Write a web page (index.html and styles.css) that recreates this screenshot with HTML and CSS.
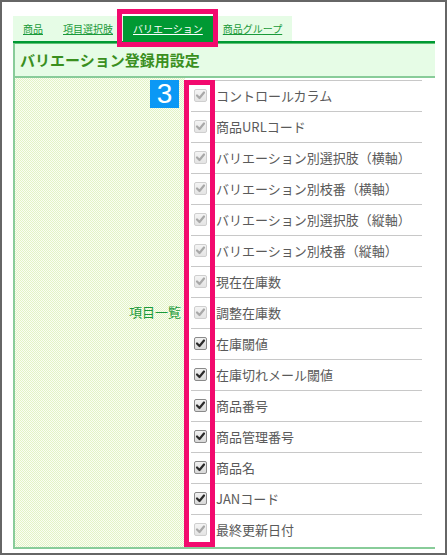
FILE: index.html
```html
<!DOCTYPE html>
<html lang="ja">
<head>
<meta charset="utf-8">
<title>バリエーション登録用設定</title>
<link rel="stylesheet" href="styles.css">
</head>
<body>
<div class="frame">
  <ul class="tabs">
    <li class="tab"><a href="#">商品</a></li>
    <li class="tab"><a href="#">項目選択肢</a></li>
    <li class="tab active"><a href="#">バリエーション</a></li>
    <li class="tab"><a href="#">商品グループ</a></li>
  </ul>
  <div class="panel">
    <h2 class="panel-title">バリエーション登録用設定</h2>
    <div class="panel-body">
      <div class="label-cell">項目一覧</div>
      <div class="list-cell">
        <ul class="items">
          <li class="item"><span class="cb off"><svg viewBox="0 0 13 13"><path d="M3 6.5 L5.5 9 L10 3.5"/></svg></span><span>コントロールカラム</span></li>
          <li class="item"><span class="cb off"><svg viewBox="0 0 13 13"><path d="M3 6.5 L5.5 9 L10 3.5"/></svg></span><span>商品URLコード</span></li>
          <li class="item"><span class="cb off"><svg viewBox="0 0 13 13"><path d="M3 6.5 L5.5 9 L10 3.5"/></svg></span><span>バリエーション別選択肢（横軸）</span></li>
          <li class="item"><span class="cb off"><svg viewBox="0 0 13 13"><path d="M3 6.5 L5.5 9 L10 3.5"/></svg></span><span>バリエーション別枝番（横軸）</span></li>
          <li class="item"><span class="cb off"><svg viewBox="0 0 13 13"><path d="M3 6.5 L5.5 9 L10 3.5"/></svg></span><span>バリエーション別選択肢（縦軸）</span></li>
          <li class="item"><span class="cb off"><svg viewBox="0 0 13 13"><path d="M3 6.5 L5.5 9 L10 3.5"/></svg></span><span>バリエーション別枝番（縦軸）</span></li>
          <li class="item"><span class="cb off"><svg viewBox="0 0 13 13"><path d="M3 6.5 L5.5 9 L10 3.5"/></svg></span><span>現在在庫数</span></li>
          <li class="item"><span class="cb off"><svg viewBox="0 0 13 13"><path d="M3 6.5 L5.5 9 L10 3.5"/></svg></span><span>調整在庫数</span></li>
          <li class="item"><span class="cb on"><svg viewBox="0 0 13 13"><path d="M3 6.5 L5.5 9 L10 3.5"/></svg></span><span>在庫閾値</span></li>
          <li class="item"><span class="cb on"><svg viewBox="0 0 13 13"><path d="M3 6.5 L5.5 9 L10 3.5"/></svg></span><span>在庫切れメール閾値</span></li>
          <li class="item"><span class="cb on"><svg viewBox="0 0 13 13"><path d="M3 6.5 L5.5 9 L10 3.5"/></svg></span><span>商品番号</span></li>
          <li class="item"><span class="cb on"><svg viewBox="0 0 13 13"><path d="M3 6.5 L5.5 9 L10 3.5"/></svg></span><span>商品管理番号</span></li>
          <li class="item"><span class="cb on"><svg viewBox="0 0 13 13"><path d="M3 6.5 L5.5 9 L10 3.5"/></svg></span><span>商品名</span></li>
          <li class="item"><span class="cb on"><svg viewBox="0 0 13 13"><path d="M3 6.5 L5.5 9 L10 3.5"/></svg></span><span>JANコード</span></li>
          <li class="item"><span class="cb off"><svg viewBox="0 0 13 13"><path d="M3 6.5 L5.5 9 L10 3.5"/></svg></span><span>最終更新日付</span></li>
        </ul>
      </div>
    </div>
  </div>
  <div class="hl hl-tab"></div>
  <div class="hl hl-checks"></div>
  <div class="badge">3</div>
</div>
</body>
</html>
```
FILE: styles.css
```css
* { box-sizing: border-box; }
html, body { margin: 0; padding: 0; background: #fff; }
body { font-family: "Noto Sans CJK JP", "Noto Sans", sans-serif; }

.frame {
  position: relative;
  width: 447px;
  height: 555px;
  border: 2px solid #666;
  padding: 14px 0 0 11px;
}

.tabs {
  list-style: none;
  margin: 0;
  padding: 0;
  display: flex;
  height: 25px;
}
.tab {
  background: #e6fce6;
  padding: 0 10px;
  font-size: 10px;
  line-height: 25px;
}
.tab a { color: #1a9a3a; text-decoration: underline; }
.tab.active { background: #009933; }
.tab.active a { color: #fff; }

.panel {
  width: 422px;
  border-top: 2px solid #009933;
}
.panel-title {
  margin: 0;
  height: 35px;
  border-top: 1px solid #5fc275;
  border-left: 2px solid #88cc99;
  border-bottom: 2px solid #88cc99;
  background: #e6fce6;
  padding-left: 5px;
  font-size: 15px;
  font-weight: bold;
  line-height: 31px;
  color: #3a8f1e;
}

.panel-body {
  display: flex;
  height: 471px;
  border-left: 2px solid #88cc99;
  border-bottom: 2px solid #88cc99;
}
.label-cell {
  width: 170px;
  display: flex;
  align-items: center;
  justify-content: flex-end;
  padding-right: 4px;
  padding-bottom: 2px;
  font-size: 13px;
  color: #1a9a3a;
  background-color: #f8fcf0;
  background-image: repeating-conic-gradient(#e2f3c6 0 25%, #fafdf3 0 50%);
  background-size: 2px 2px;
}
.list-cell {
  flex: 1;
  padding: 2px 13px 0 6px;
}
.items {
  list-style: none;
  margin: 0;
  padding: 0;
  border-top: 1px solid #c8c8c8;
}
.item {
  display: flex;
  align-items: center;
  gap: 9px;
  height: 31px;
  padding-left: 3px;
  padding-bottom: 2px;
  border-bottom: 1px solid #c8c8c8;
  font-size: 13px;
  color: #5a5a5a;
}
.item:last-child { border-bottom: none; height: 30px; }

.cb {
  width: 13px;
  height: 13px;
  flex: none;
  border-radius: 2px;
  display: flex;
}
.cb svg { width: 13px; height: 13px; margin: -1px; }
.cb path { fill: none; stroke-width: 2.2; stroke-linecap: round; stroke-linejoin: round; }
.cb.off { border: 1px solid #cfcfcf; background: linear-gradient(#f4f4f4, #e4e4e4); }
.cb.off path { stroke: #a8a8a8; }
.cb.on { border: 1px solid #8a8a8a; background: linear-gradient(#f2f2f2, #d8d8d8); }
.cb.on path { stroke: #2a2a2a; }

.hl {
  position: absolute;
  border: 5px solid #f20a6e;
}
.hl-tab { left: 115px; top: 7px; width: 101px; height: 38px; }
.hl-checks { left: 182px; top: 78px; width: 31px; height: 467px; }

.badge {
  position: absolute;
  left: 148px;
  top: 78px;
  width: 29px;
  height: 28px;
  background: #0b98f5;
  color: #fff;
  font-family: "Liberation Sans", Arial, sans-serif;
  font-size: 28px;
  line-height: 28px;
  text-align: center;
}
```
